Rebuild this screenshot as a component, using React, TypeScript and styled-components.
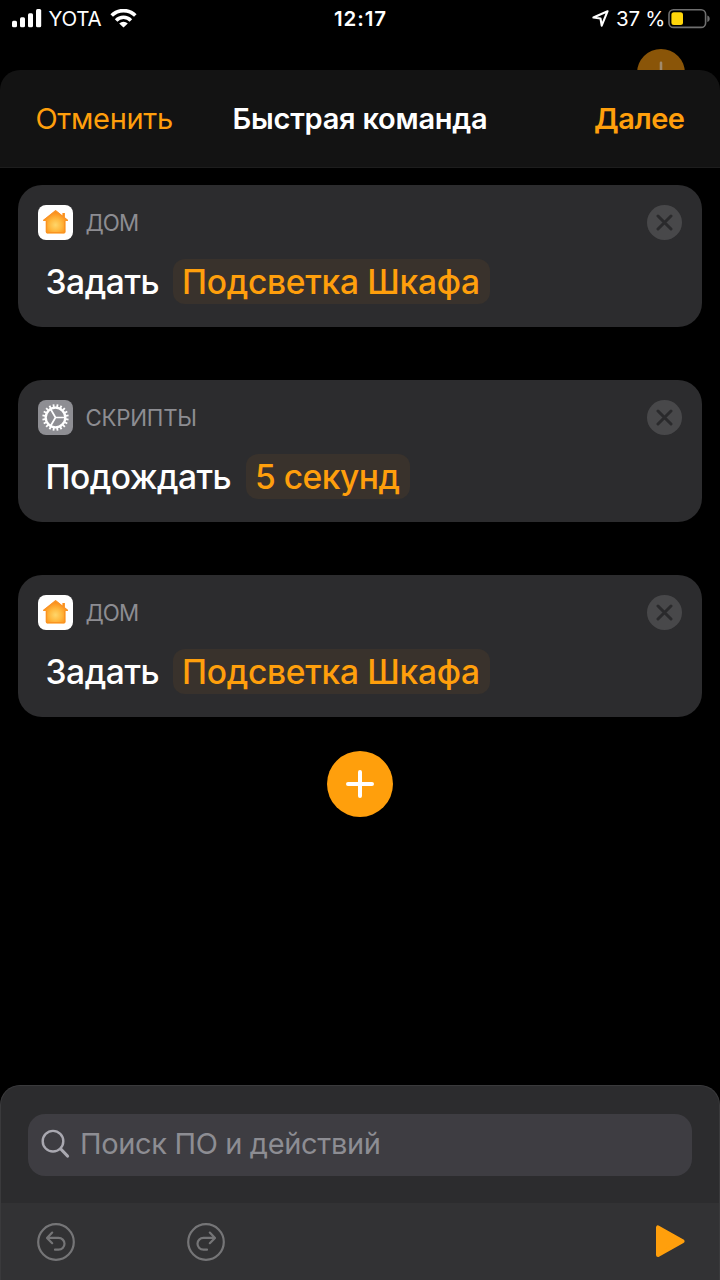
import React from 'react';
import styled, { createGlobalStyle } from 'styled-components';

const ACCENT = '#ff9f0c';

const GlobalStyle = createGlobalStyle`
  *, *::before, *::after { box-sizing: border-box; }
  body {
    margin: 0;
    background: #000;
    font-family: Inter, "Liberation Sans", sans-serif;
    color: #fff;
  }
  button { font: inherit; color: inherit; background: none; border: 0; padding: 0; margin: 0; }
  svg { display: block; flex: none; }
`;

const Screen = styled.div`
  position: relative;
  width: 720px;
  height: 1280px;
  display: flex;
  flex-direction: column;
  background: #000;
  overflow: hidden;
  white-space: nowrap;
`;

const StatusBar = styled.div`
  display: grid;
  grid-template-columns: 1fr auto 1fr;
  align-items: center;
  height: 70px;
  padding: 0 9px 33px 12px;
  font-size: 20.5px;
  line-height: 24px;
`;

const StatusGroup = styled.div<{ $end?: boolean }>`
  display: flex;
  align-items: center;
  justify-content: ${(p) => (p.$end ? 'flex-end' : 'flex-start')};
`;

const Carrier = styled.span`
  margin: 0 9px 0 6.5px;
  letter-spacing: -0.3px;
`;

const Clock = styled.span`
  margin-right: 2px;
  font-weight: 600;
  letter-spacing: 0.9px;
`;

const Percent = styled.span`
  margin: 0 3px 0 7px;
  letter-spacing: -0.3px;
`;

const BackdropButton = styled.div`
  position: absolute;
  left: 637px;
  top: 49px;
  width: 48px;
  height: 48px;
  border-radius: 50%;
  background: #8a5508;
  display: flex;
  align-items: center;
  justify-content: center;
`;

const Sheet = styled.div`
  position: relative;
  flex: 1;
  display: flex;
  flex-direction: column;
  background: #000;
  border-radius: 20px 20px 0 0;
  overflow: hidden;
`;

const Header = styled.header`
  display: grid;
  grid-template-columns: 1fr auto 1fr;
  align-items: center;
  height: 98px;
  padding: 0 35.5px;
  background: #131313;
  border-bottom: 1px solid #1d1d1d;
  font-size: 29px;
  line-height: 36px;
`;

const HeaderButton = styled.button<{ $primary?: boolean }>`
  justify-self: ${(p) => (p.$primary ? 'end' : 'start')};
  color: ${ACCENT};
  font-weight: ${(p) => (p.$primary ? 600 : 400)};
  letter-spacing: ${(p) => (p.$primary ? '-0.5px' : '-0.3px')};
`;

const Title = styled.h1`
  margin: 0;
  font-size: inherit;
  font-weight: 600;
  letter-spacing: -0.24px;
`;

const Actions = styled.main`
  flex: 1;
  display: flex;
  flex-direction: column;
  align-items: center;
  padding: 16.5px 18px 0;
`;

const Card = styled.section`
  align-self: stretch;
  height: 142px;
  padding: 20.5px 20px 0;
  margin-bottom: 53px;
  border-radius: 24px;
  background: #2c2c2e;

  &:last-of-type { margin-bottom: 34.5px; }
`;

const CardHead = styled.div`
  display: flex;
  align-items: center;
  height: 35px;
`;

const AppIcon = styled.span<{ $bg: string }>`
  display: flex;
  align-items: center;
  justify-content: center;
  width: 35px;
  height: 35px;
  border-radius: 8px;
  background: ${(p) => p.$bg};
`;

const AppName = styled.span<{ $track: number }>`
  flex: 1;
  margin-left: 12.5px;
  font-size: 22.3px;
  line-height: 28px;
  color: #8d8d92;
  letter-spacing: ${(p) => p.$track}px;
`;

const CloseButton = styled.button`
  display: flex;
  align-items: center;
  justify-content: center;
  width: 35px;
  height: 35px;
  border-radius: 50%;
  background: #48484a;
`;

const Sentence = styled.div`
  display: flex;
  align-items: center;
  margin: 18.5px 0 0 7px;
  height: 45px;
  font-size: 33.6px;
  line-height: 45px;
  font-weight: 500;
`;

const Verb = styled.span<{ $width: number; $track: number }>`
  width: ${(p) => p.$width}px;
  height: 45px;
  padding-left: 0.5px;
  letter-spacing: ${(p) => p.$track}px;
`;

const Token = styled.span<{ $width: number; $track: number }>`
  width: ${(p) => p.$width}px;
  height: 45px;
  padding-left: 9px;
  border-radius: 12px;
  background: #39322c;
  color: ${ACCENT};
  letter-spacing: ${(p) => p.$track}px;
`;

const AddButton = styled.button`
  display: flex;
  align-items: center;
  justify-content: center;
  width: 66px;
  height: 66px;
  border-radius: 50%;
  background: ${ACCENT};
`;

const Dock = styled.footer`
  display: flex;
  flex-direction: column;
  height: 195px;
  border: 1px solid #3a3a3c;
  border-bottom: 0;
  border-radius: 20px 20px 0 0;
  background: #2c2c2e;
  overflow: hidden;
`;

const SearchField = styled.div`
  display: flex;
  align-items: center;
  height: 62px;
  margin: 27.5px 27px;
  padding: 0 0 1px 13px;
  border-radius: 17px;
  background: #3e3d42;
  color: #8d8d93;
  font-size: 29px;
  line-height: 36px;
`;

const Placeholder = styled.span`
  margin-left: 9px;
  letter-spacing: -0.35px;
`;

const Toolbar = styled.div`
  flex: 1;
  display: flex;
  align-items: center;
  gap: 110px;
  padding: 0 33px 0 35px;
  background: #323234;
`;

const PlayButton = styled.button`
  margin-left: auto;
`;

const SignalIcon = () => (
  <svg width="30" height="20" viewBox="0 0 30 20" fill="#fff">
    <rect x="0" y="11.7" width="5" height="6.5" rx="1.5" />
    <rect x="8" y="8.2" width="5" height="10" rx="1.5" />
    <rect x="16" y="4.2" width="5" height="14" rx="1.5" />
    <rect x="24" y="0" width="5.2" height="18.2" rx="1.5" />
  </svg>
);

const WifiIcon = () => (
  <svg width="27" height="20" viewBox="0 0 27 20" fill="none" stroke="#fff" strokeWidth="3.6">
    <path d="M1.7 6.5a16.6 16.6 0 0 1 23.6 0" />
    <path d="M6.1 11.4a10.4 10.4 0 0 1 14.8 0" />
    <path d="M13.5 18.6 9.2 14.4a6.2 6.2 0 0 1 8.6 0z" fill="#fff" stroke="none" />
  </svg>
);

const LocationIcon = () => (
  <svg width="17" height="18" viewBox="0 0 17 18" fill="none" stroke="#fff" strokeWidth="2.1" strokeLinejoin="round">
    <path d="M15.6 1.2 1.4 7.5l7.1 1 1.2 7.2z" />
  </svg>
);

const BatteryIcon = () => (
  <svg width="43" height="20" viewBox="0 0 43 20">
    <rect x="1" y="0.8" width="36.6" height="17.6" rx="4.5" fill="none" stroke="#6f6f6f" strokeWidth="1.6" />
    <rect x="3.4" y="3.2" width="11.6" height="12.8" rx="2.5" fill="#ffd60a" />
    <path d="M39.3 6.4c3.2 1 3.2 5.6 0 6.6z" fill="#6f6f6f" />
  </svg>
);

const HomeIcon = () => (
  <svg width="35" height="35" viewBox="0 0 35 35">
    <defs>
      <radialGradient id="homeGlow" gradientUnits="userSpaceOnUse" cx="17.5" cy="20" r="12.5">
        <stop offset="0" stopColor="#ffd66a" />
        <stop offset="0.5" stopColor="#ffb83e" />
        <stop offset="1" stopColor="#fb8f1a" />
      </radialGradient>
    </defs>
    <path
      d="M17 5.6q.6-.5 1.2 0l6.2 5V8.1h2.5v4.5l3.1 2.5q.4.9-.6.9h-1.9v11q0 1.4-1.4 1.4H9.2q-1.4 0-1.4-1.4V16H5.7q-1 0-.5-.9z"
      fill="url(#homeGlow)"
    />
    <path d="M5.6 15.5 17.6 6l12 9.5" fill="none" stroke="#f9942a" strokeWidth="1.3" />
    <path d="M8.5 16v10.8q0 .9.9.9h16.3q.9 0 .9-.9V16" fill="none" stroke="#fa9320" strokeWidth="1.3" />
  </svg>
);

const TEETH = Array.from({ length: 20 }, (_, i) => i * 18 + 9);

const GearIcon = () => (
  <svg width="35" height="35" viewBox="-17.5 -17.5 35 35" fill="none" stroke="#fff">
    <circle r="9.8" strokeWidth="2.3" />
    <path d="M0 0H9.5M0 0-4.8-8.3M0 0-4.8 8.3" strokeWidth="1.7" />
    {TEETH.map((angle) => (
      <path key={angle} d="M10.5 0H13.2" strokeWidth="1.8" transform={`rotate(${angle})`} />
    ))}
  </svg>
);

const CrossIcon = () => (
  <svg width="17" height="17" viewBox="0 0 17 17" stroke="#2a2a2c" strokeWidth="3" strokeLinecap="round">
    <path d="M2 2 15 15M15 2 2 15" />
  </svg>
);

const PlusIcon = ({ size, color, weight }: { size: number; color: string; weight: number }) => (
  <svg width={size} height={size} viewBox="0 0 28 28" stroke={color} strokeWidth={weight} strokeLinecap="round">
    <path d="M14 2v24M2 14h24" />
  </svg>
);

const SearchIcon = () => (
  <svg width="30" height="30" viewBox="0 0 30 30" fill="none" stroke="#a9a8b0" strokeLinecap="round">
    <circle cx="12" cy="12.2" r="10.3" strokeWidth="2.4" />
    <path d="M19.8 20 26.5 27" strokeWidth="3.2" />
  </svg>
);

const TurnIcon = ({ redo }: { redo?: boolean }) => (
  <svg width="40" height="40" viewBox="0 0 40 40" fill="none" stroke="#757577" strokeWidth="2.2" strokeLinecap="round" strokeLinejoin="round">
    <circle cx="20" cy="20" r="17.8" />
    <g transform={redo ? 'translate(40 0) scale(-1 1)' : undefined}>
      <path d="M16.2 10.6 11 15.9l5.2 5.3M11.4 15.9h11.2a5.9 5.9 0 0 1 0 11.8h-3.6" />
    </g>
  </svg>
);

const PlayIcon = () => (
  <svg width="31" height="34" viewBox="0 0 31 34" fill={ACCENT} stroke={ACCENT} strokeWidth="4" strokeLinejoin="round">
    <path d="M3 2.4v27.5L27.5 16.2z" />
  </svg>
);

type App = 'home' | 'scripting';

interface Action {
  app: App;
  name: string;
  nameTrack: number;
  verb: string;
  verbWidth: number;
  verbTrack: number;
  token: string;
  tokenWidth: number;
  tokenTrack: number;
}

const setLight: Action = {
  app: 'home',
  name: 'ДОМ',
  nameTrack: -0.9,
  verb: 'Задать',
  verbWidth: 128,
  verbTrack: -0.45,
  token: 'Подсветка Шкафа',
  tokenWidth: 317,
  tokenTrack: -0.29,
};

const wait: Action = {
  app: 'scripting',
  name: 'СКРИПТЫ',
  nameTrack: -0.25,
  verb: 'Подождать',
  verbWidth: 201,
  verbTrack: -0.55,
  token: '5 секунд',
  tokenWidth: 164,
  tokenTrack: -0.5,
};

const ACTIONS: Action[] = [setLight, wait, setLight];

const ActionCard = ({ action }: { action: Action }) => (
  <Card>
    <CardHead>
      <AppIcon $bg={action.app === 'home' ? '#fff' : '#8e8e93'}>
        {action.app === 'home' ? <HomeIcon /> : <GearIcon />}
      </AppIcon>
      <AppName $track={action.nameTrack}>{action.name}</AppName>
      <CloseButton aria-label="Удалить">
        <CrossIcon />
      </CloseButton>
    </CardHead>
    <Sentence>
      <Verb $width={action.verbWidth} $track={action.verbTrack}>{action.verb}</Verb>
      <Token $width={action.tokenWidth} $track={action.tokenTrack}>{action.token}</Token>
    </Sentence>
  </Card>
);

export default function App() {
  return (
    <>
      <GlobalStyle />
      <Screen>
        <StatusBar>
          <StatusGroup>
            <SignalIcon />
            <Carrier>YOTA</Carrier>
            <WifiIcon />
          </StatusGroup>
          <Clock>12:17</Clock>
          <StatusGroup $end>
            <LocationIcon />
            <Percent>37 %</Percent>
            <BatteryIcon />
          </StatusGroup>
        </StatusBar>
        <BackdropButton>
          <PlusIcon size={24} color="#a08a6c" weight={3} />
        </BackdropButton>
        <Sheet>
          <Header>
            <HeaderButton>Отменить</HeaderButton>
            <Title>Быстрая команда</Title>
            <HeaderButton $primary>Далее</HeaderButton>
          </Header>
          <Actions>
            {ACTIONS.map((action, i) => (
              <ActionCard key={i} action={action} />
            ))}
            <AddButton aria-label="Добавить">
              <PlusIcon size={28} color="#fff" weight={4} />
            </AddButton>
          </Actions>
          <Dock>
            <SearchField>
              <SearchIcon />
              <Placeholder>Поиск ПО и действий</Placeholder>
            </SearchField>
            <Toolbar>
              <button aria-label="Отменить действие"><TurnIcon /></button>
              <button aria-label="Повторить действие"><TurnIcon redo /></button>
              <PlayButton aria-label="Запустить"><PlayIcon /></PlayButton>
            </Toolbar>
          </Dock>
        </Sheet>
      </Screen>
    </>
  );
}
